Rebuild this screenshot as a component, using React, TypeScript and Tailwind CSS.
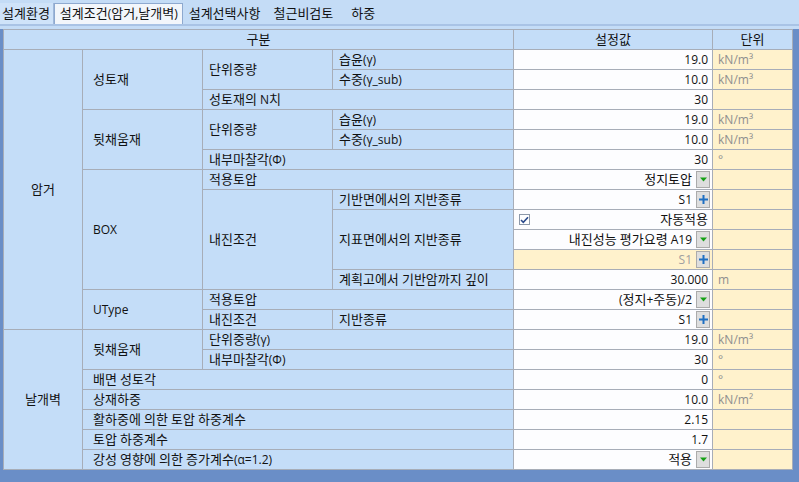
import React from 'react';

// 셀 스타일
const GRID = 'border border-[#a7adb8]';
const LBL = `${GRID} bg-[#c4ddf8] pl-[6px] text-left whitespace-nowrap`;
const LBL2 = `${GRID} bg-[#c4ddf8] pl-[10px] text-left whitespace-nowrap`;
const MID = `${GRID} bg-[#c4ddf8] text-center`;
const VAL = `${GRID} bg-[#fdfdff] pr-[4px] text-right whitespace-nowrap`;
const UNIT = `${GRID} bg-[#fff2cc] pl-[5px] text-left text-[#8f8f8f] whitespace-nowrap`;

// 한글은 조금 크게 (맑은 고딕 폭 맞춤)
const k = (s: string) =>
  s.split(/([가-힣]+)/).map((part, i) =>
    /[가-힣]/.test(part) ? (
      <span key={i} className="text-[13px]">
        {part}
      </span>
    ) : (
      part
    )
  );

const DropBtn = () => (
  <span className="inline-flex h-[17px] w-[14px] items-center justify-center border border-[#ababab] bg-[#dedede]">
    <svg width="7" height="5" viewBox="0 0 7 5">
      <path d="M0 0.5h7L3.5 4.5z" fill="#17a017" />
    </svg>
  </span>
);

const PlusBtn = () => (
  <span className="inline-flex h-[17px] w-[14px] items-center justify-center border border-[#ababab] bg-[#dedede]">
    <svg width="9" height="9" viewBox="0 0 9 9">
      <path d="M3.5 0h2v3.5H9v2H5.5V9h-2V5.5H0v-2h3.5z" fill="#1e6fc2" />
    </svg>
  </span>
);

const BtnValue: React.FC<{ text: string; kind: 'drop' | 'plus'; muted?: boolean }> = ({ text, kind, muted }) => (
  <div className="flex items-center justify-end gap-[4px] pr-[2px]">
    <span className={muted ? 'text-[#a0a0a0]' : ''}>{k(text)}</span>
    {kind === 'drop' ? <DropBtn /> : <PlusBtn />}
  </div>
);

const App: React.FC = () => {
  return (
    <div className="h-[482px] w-[799px] overflow-hidden bg-[#c4dcf6] font-['Open_Sans','Noto_Sans_CJK_KR',sans-serif] text-[12px] text-[#111]">
      {/* 탭 */}
      <div className="flex h-[24px] items-end">
        <div className="flex h-[21px] items-center border-r border-[#9fb8da] bg-[#cfe3f9] pl-[2px] pr-[3px]">{k('설계환경')}</div>
        <div className="flex h-[21px] items-center border border-b-0 border-[#8ea9cf] bg-[#f2f6fb] pl-[5px] pr-[4px]">
          {k('설계조건(암거,날개벽)')}
        </div>
        <div className="flex h-[21px] items-center pl-[6px]">{k('설계선택사항')}</div>
        <div className="flex h-[21px] items-center pl-[13px]">{k('철근비검토')}</div>
        <div className="flex h-[21px] items-center pl-[18px]">{k('하중')}</div>
      </div>
      <div className="h-[2px] bg-[#a9c3e5]" />
      <div className="h-[3px]" />

      {/* 그리드 */}
      <div className="bg-[#6a8ec7] pb-[12px] pl-[3px] pr-[7px]">
        <table className="w-[789px] table-fixed border-collapse leading-[18px]">
          <colgroup>
            <col className="w-[79px]" />
            <col className="w-[120px]" />
            <col className="w-[130px]" />
            <col className="w-[181px]" />
            <col className="w-[199px]" />
            <col className="w-[80px]" />
          </colgroup>
          <tbody>
            <tr className="h-[20px]">
              <td colSpan={4} className={MID}>{k('구분')}</td>
              <td className={MID}>{k('설정값')}</td>
              <td className={MID}>{k('단위')}</td>
            </tr>

            {/* 암거 */}
            <tr className="h-[20px]">
              <td rowSpan={14} className={MID}>{k('암거')}</td>
              <td rowSpan={3} className={LBL2}>{k('성토재')}</td>
              <td rowSpan={2} className={LBL}>{k('단위중량')}</td>
              <td className={LBL}>{k('습윤(γ)')}</td>
              <td className={VAL}>19.0</td>
              <td className={UNIT}>kN/m³</td>
            </tr>
            <tr className="h-[20px]">
              <td className={LBL}>{k('수중(γ_sub)')}</td>
              <td className={VAL}>10.0</td>
              <td className={UNIT}>kN/m³</td>
            </tr>
            <tr className="h-[20px]">
              <td colSpan={2} className={LBL}>{k('성토재의 N치')}</td>
              <td className={VAL}>30</td>
              <td className={UNIT}></td>
            </tr>
            <tr className="h-[20px]">
              <td rowSpan={3} className={LBL2}>{k('뒷채움재')}</td>
              <td rowSpan={2} className={LBL}>{k('단위중량')}</td>
              <td className={LBL}>{k('습윤(γ)')}</td>
              <td className={VAL}>19.0</td>
              <td className={UNIT}>kN/m³</td>
            </tr>
            <tr className="h-[20px]">
              <td className={LBL}>{k('수중(γ_sub)')}</td>
              <td className={VAL}>10.0</td>
              <td className={UNIT}>kN/m³</td>
            </tr>
            <tr className="h-[20px]">
              <td colSpan={2} className={LBL}>{k('내부마찰각(Φ)')}</td>
              <td className={VAL}>30</td>
              <td className={UNIT}>°</td>
            </tr>
            <tr className="h-[20px]">
              <td rowSpan={6} className={LBL2}>BOX</td>
              <td colSpan={2} className={LBL}>{k('적용토압')}</td>
              <td className={`${GRID} bg-[#fdfdff]`}><BtnValue text="정지토압" kind="drop" /></td>
              <td className={UNIT}></td>
            </tr>
            <tr className="h-[20px]">
              <td rowSpan={5} className={LBL}>{k('내진조건')}</td>
              <td className={LBL}>{k('기반면에서의 지반종류')}</td>
              <td className={`${GRID} bg-[#fdfdff]`}><BtnValue text="S1" kind="plus" /></td>
              <td className={UNIT}></td>
            </tr>
            <tr className="h-[20px]">
              <td rowSpan={3} className={LBL}>{k('지표면에서의 지반종류')}</td>
              <td className={`${GRID} bg-[#fdfdff]`}>
                <div className="flex items-center justify-between pl-[5px] pr-[4px]">
                  <span className="inline-flex h-[11px] w-[11px] items-center justify-center border border-[#8d99aa] bg-white">
                    <svg width="9" height="8" viewBox="0 0 9 8">
                      <path d="M1 4l2.3 2.3L8 1.2" stroke="#2b4a8c" strokeWidth="1.6" fill="none" />
                    </svg>
                  </span>
                  <span>{k('자동적용')}</span>
                </div>
              </td>
              <td className={UNIT}></td>
            </tr>
            <tr className="h-[20px]">
              <td className={`${GRID} bg-[#fdfdff]`}><BtnValue text="내진성능 평가요령 A19" kind="drop" /></td>
              <td className={UNIT}></td>
            </tr>
            <tr className="h-[20px]">
              <td className={`${GRID} bg-[#fff2cc]`}><BtnValue text="S1" kind="plus" muted /></td>
              <td className={UNIT}></td>
            </tr>
            <tr className="h-[20px]">
              <td className={LBL}>{k('계획고에서 기반암까지 깊이')}</td>
              <td className={VAL}>30.000</td>
              <td className={UNIT}>m</td>
            </tr>
            <tr className="h-[20px]">
              <td rowSpan={2} className={LBL2}>UType</td>
              <td colSpan={2} className={LBL}>{k('적용토압')}</td>
              <td className={`${GRID} bg-[#fdfdff]`}><BtnValue text="(정지+주동)/2" kind="drop" /></td>
              <td className={UNIT}></td>
            </tr>
            <tr className="h-[20px]">
              <td className={LBL}>{k('내진조건')}</td>
              <td className={LBL}>{k('지반종류')}</td>
              <td className={`${GRID} bg-[#fdfdff]`}><BtnValue text="S1" kind="plus" /></td>
              <td className={UNIT}></td>
            </tr>

            {/* 날개벽 */}
            <tr className="h-[20px]">
              <td rowSpan={7} className={MID}>{k('날개벽')}</td>
              <td rowSpan={2} className={LBL2}>{k('뒷채움재')}</td>
              <td colSpan={2} className={LBL}>{k('단위중량(γ)')}</td>
              <td className={VAL}>19.0</td>
              <td className={UNIT}>kN/m³</td>
            </tr>
            <tr className="h-[20px]">
              <td colSpan={2} className={LBL}>{k('내부마찰각(Φ)')}</td>
              <td className={VAL}>30</td>
              <td className={UNIT}>°</td>
            </tr>
            <tr className="h-[20px]">
              <td colSpan={3} className={LBL2}>{k('배면 성토각')}</td>
              <td className={VAL}>0</td>
              <td className={UNIT}>°</td>
            </tr>
            <tr className="h-[20px]">
              <td colSpan={3} className={LBL2}>{k('상재하중')}</td>
              <td className={VAL}>10.0</td>
              <td className={UNIT}>kN/m²</td>
            </tr>
            <tr className="h-[20px]">
              <td colSpan={3} className={LBL2}>{k('활하중에 의한 토압 하중계수')}</td>
              <td className={VAL}>2.15</td>
              <td className={UNIT}></td>
            </tr>
            <tr className="h-[20px]">
              <td colSpan={3} className={LBL2}>{k('토압 하중계수')}</td>
              <td className={VAL}>1.7</td>
              <td className={UNIT}></td>
            </tr>
            <tr className="h-[20px]">
              <td colSpan={3} className={LBL2}>{k('강성 영향에 의한 증가계수(α=1.2)')}</td>
              <td className={`${GRID} bg-[#fdfdff]`}><BtnValue text="적용" kind="drop" /></td>
              <td className={UNIT}></td>
            </tr>
          </tbody>
        </table>
      </div>
    </div>
  );
};

export default App;
